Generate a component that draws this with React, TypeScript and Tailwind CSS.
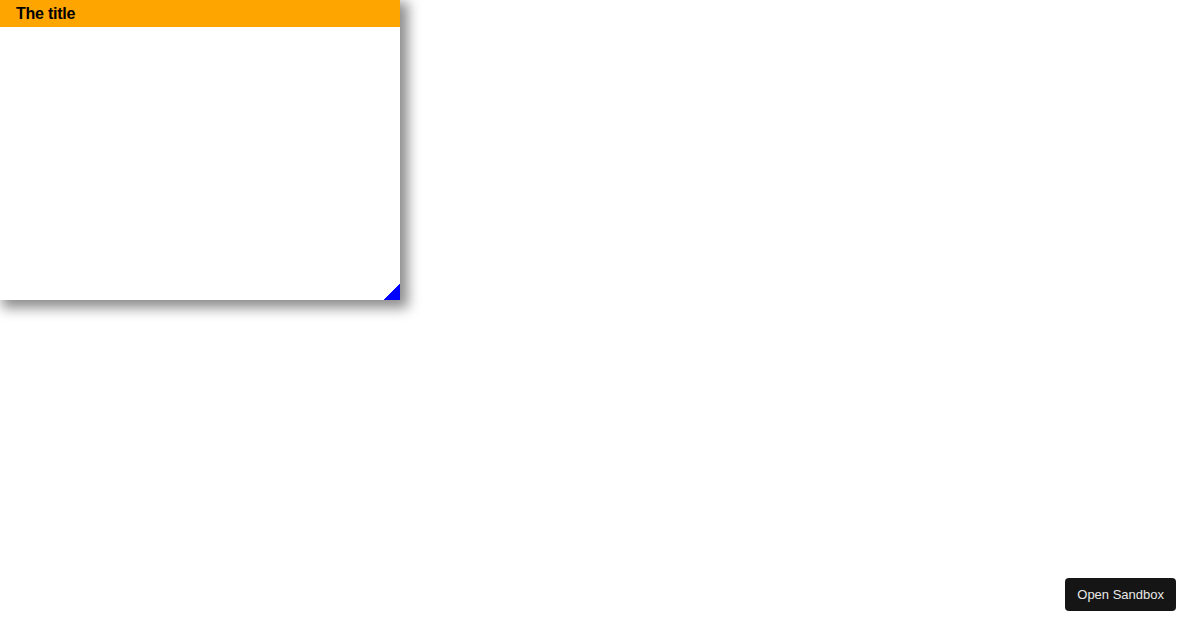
import React from 'react';

const Panel = () => (
  <div className="relative w-[400px] h-[300px] bg-white shadow-[5px_5px_12px_3px_rgba(0,0,0,0.45)]">
    <div className="h-[27px] bg-[#ffa500] px-4 flex items-center">
      <span className="text-[16px] font-bold text-black leading-none tracking-[-0.25px]">The title</span>
    </div>
    {/* resize handle */}
    <div className="absolute right-0 bottom-0 w-4 h-4 bg-[linear-gradient(135deg,transparent_50%,#0000ff_50%)]" />
  </div>
);

export default function App() {
  return (
    <div className="relative w-[1200px] h-[630px] bg-white overflow-hidden font-['Liberation_Sans',Arial,sans-serif]">
      <Panel />
      <button className="absolute right-[24px] bottom-[19px] h-[33px] px-3 rounded bg-[#151515] text-[13px] text-[#e8e8e8]">
        Open Sandbox
      </button>
    </div>
  );
}
